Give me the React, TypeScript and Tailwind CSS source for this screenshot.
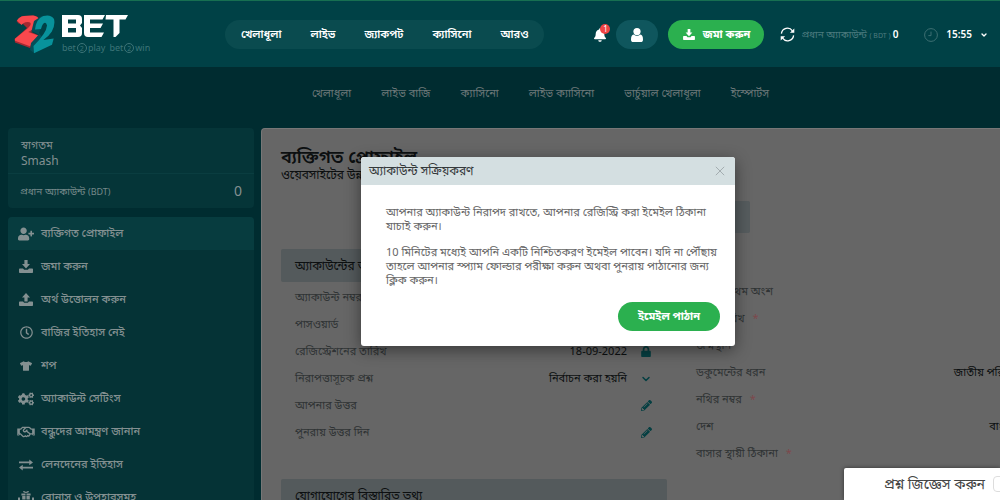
import type { ReactNode } from 'react'
import { ChevronDown } from 'lucide-react'
import { FaBell, FaCogs, FaLock, FaPencilAlt, FaRegClock, FaRegHandshake, FaTshirt, FaUserPlus } from 'react-icons/fa'

function TrayIcon({ up = false, className = '' }: { up?: boolean; className?: string }) {
  return (
    <svg viewBox="0 0 14 13" fill="currentColor" className={className} aria-hidden="true">
      {up ? <path d="M7 0 11 4.6H8.6V8.6H5.4V4.6H3Z" /> : <path d="M5.4 0H8.6V4H11L7 8.6 3 4H5.4Z" />}
      <path d="M0 9.2Q0 8.4.8 8.4H4L5.2 9.8H8.8L10 8.4H13.2Q14 8.4 14 9.2V12.2Q14 13 13.2 13H.8Q0 13 0 12.2Z" />
    </svg>
  )
}

function ExchangeIcon() {
  return (
    <svg viewBox="0 0 15 12" fill="currentColor" className="w-[14px] h-3" aria-hidden="true">
      <path d="M0 2.2H11V.2L15 3.2 11 6.2V4.2H0Z" />
      <path d="M15 7.8H4V5.8L0 8.8 4 11.8V9.8H15Z" />
    </svg>
  )
}

function GiftIcon() {
  return (
    <svg viewBox="0 0 16 16" fill="currentColor" className="w-4 h-4" aria-hidden="true">
      <path d="M8 3Q5 3 5 1.6Q5.4 0 8 2Q10.6 0 11 1.6Q11 3 8 3Z" />
      <path d="M3.4 3.6H7.5V5.4H3.4ZM8.5 3.6H12.6V5.4H8.5ZM4.2 6H7.5V9.4H4.2ZM8.5 6H11.8V9.4H8.5Z" />
      <path d="M0 7.6H2V10.6L7.4 12.4V16H3.6L0 12.6ZM16 7.6H14V10.6L8.6 12.4V16H12.4L16 12.6Z" />
    </svg>
  )
}

function PersonIcon() {
  return (
    <svg viewBox="0 0 12 14" fill="currentColor" className="w-3 h-[14px]" aria-hidden="true">
      <circle cx="6" cy="3.6" r="3.6" />
      <path d="M2.6 6.6Q0 7.4 0 11.4Q0 14 2.4 14H9.6Q12 14 12 11.4Q12 7.4 9.4 6.6Q6 9.4 2.6 6.6Z" />
    </svg>
  )
}

function RefreshIcon() {
  return (
    <svg viewBox="0 0 15 15" className="w-[15px] h-[15px]" aria-hidden="true">
      <path d="M1.4 6.6A6.1 6.1 0 0 1 12.4 3.8M13.6 8.4A6.1 6.1 0 0 1 2.6 11.2" fill="none" stroke="currentColor" strokeWidth="1.3" />
      <path d="M14.3 1.4V5.8H9.9ZM.7 13.6V9.2H5.1Z" fill="currentColor" />
    </svg>
  )
}

function ClockIcon() {
  return (
    <svg viewBox="0 0 14 14" fill="none" stroke="currentColor" className="w-[14px] h-[14px]" aria-hidden="true">
      <circle cx="7" cy="7" r="6.4" />
      <path d="M7 3.6V7.6H4.4" />
    </svg>
  )
}

function Logo() {
  return (
    <a href="#home" className="flex items-start gap-1.5 w-[211px] pt-0.5" aria-label="22BET">
      <svg viewBox="0 0 42 40" className="w-[42px] h-10 shrink-0" aria-hidden="true">
        <path d="M2.5 6 8 1 20 .4Q27 1.500 26 9Q25 13 17 17L26 21 22 27 16 33 1 27.500 .5 24 13 13 9 9 4.500 8.500Z" fill="#a52a33" />
        <path d="M3 5.500Q5 1.500 10 1L19 .6Q25.500 1.200 25 7Q24.300 11.500 19 14.300L14.300 17 24 20.500 16 31.300 1 25.700 1 23.800 13.500 13.500Q17.500 10 16.500 8Q15.500 6.400 11.500 7.200Q9 7.800 7.500 10Z" fill="#fa484d" />
        <path d="M17.500 16 20 6 28 .7 33 4 29 9 25 18 30 25 20 38 16 35 17 28 25 19.500Z" fill="#044f58" />
        <path d="M21 14.500Q22 4 29.300 1Q37 -1 40 4Q41.500 10 37.700 16.700Q35 21 29.300 25L39.700 23.600 38 29.700 20 38.300 19.500 31Q32.500 18 33 10.500Q32 6 29 9Q27.500 11 27 14Z" fill="#08929b" />
      </svg>
      <span className="flex flex-col">
        <svg viewBox="0 0 66 22" className="w-[66px] h-[22px]" fill="#fff" aria-hidden="true">
          <path fillRule="evenodd" d="M0 0H16Q20 0 20 4V8L18 10.5 20 13V18Q20 22 16 22H0ZM6 4.6V8.6H14V4.6ZM6 13V17.4H14V13Z" />
          <path d="M22 0H43L40.5 4.6H28V8.6H41L38.5 13H28V17.4H42L39.5 22H26Q22 22 22 18Z" />
          <path d="M44 0H66L63.5 4.6H57.5V18L53.5 22H51.5V4.6H43.5Z" />
        </svg>
        <span className="flex items-center gap-1 mt-1 text-[9px] leading-[14px] text-[#3d7478] whitespace-nowrap">
          <span className="flex items-center">bet<Two />play</span>
          <span className="flex items-center">bet<Two />win</span>
        </span>
      </span>
    </a>
  )
}

function Two() {
  return <span className="grid place-items-center w-[10px] h-[10px] mx-px rounded-full border border-[#3d7478] text-[7px] leading-none">2</span>
}

const topLinks = ['খেলাধূলা', 'লাইভ', 'জ্যাকপট', 'ক্যাসিনো', 'আরও']
const subLinks = ['খেলাধূলা', 'লাইভ বাজি', 'ক্যাসিনো', 'লাইভ ক্যাসিনো', 'ভার্চুয়াল খেলাধূলা', 'ইস্পোর্টস']

const menu: { label: string; icon: ReactNode }[] = [
  { label: 'ব্যক্তিগত প্রোফাইল', icon: <FaUserPlus className="w-4 h-[14px]" /> },
  { label: 'জমা করুন', icon: <TrayIcon className="w-[14px] h-[13px]" /> },
  { label: 'অর্থ উত্তোলন করুন', icon: <TrayIcon up className="w-[14px] h-[13px]" /> },
  { label: 'বাজির ইতিহাস নেই', icon: <FaRegClock className="w-[13px] h-[13px]" /> },
  { label: 'শপ', icon: <FaTshirt className="w-3 h-3" /> },
  { label: 'অ্যাকাউন্ট সেটিংস', icon: <FaCogs className="w-4 h-[14px]" /> },
  { label: 'বন্ধুদের আমন্ত্রণ জানান', icon: <FaRegHandshake className="w-[18px] h-[14px]" /> },
  { label: 'লেনদেনের ইতিহাস', icon: <ExchangeIcon /> },
  { label: 'বোনাস ও উপহারসমূহ', icon: <GiftIcon /> },
]

function Header() {
  return (
    <header className="flex items-start h-[67px] shrink-0 border-t border-[#176f51] bg-[#004146] pl-[14px] pr-3 pt-3">
      <Logo />
      <nav className="flex items-center gap-[29px] h-[29px] mt-[7px] px-4 rounded-full bg-[#0a4b4f] text-[11px] font-semibold text-white whitespace-nowrap">
        {topLinks.map((label) => (
          <a key={label} href="#top">{label}</a>
        ))}
      </nav>
      <div className="flex items-center h-[29px] mt-[7px] ml-auto text-white whitespace-nowrap">
        <button type="button" aria-label="1" className="relative mr-2.5">
          <FaBell className="w-3 h-[14px]" />
          <span className="absolute -top-1 -right-1 grid place-items-center w-[10px] h-[10px] rounded-full bg-[#ee4444] text-[8px] leading-none">1</span>
        </button>
        <button type="button" aria-label="Smash" className="grid place-items-center w-[42px] h-[29px] rounded-full bg-[#0f565d]">
          <PersonIcon />
        </button>
        <button type="button" className="flex items-center justify-center gap-2 w-24 h-[29px] ml-[10px] rounded-full bg-[#2bb04f] text-[11px] font-bold">
          <TrayIcon className="w-3 h-[11px]" />
          জমা করুন
        </button>
        <button type="button" aria-label="প্রধান অ্যাকাউন্ট" className="ml-4 mr-1.5">
          <RefreshIcon />
        </button>
        <span className="text-[10px] text-[#4d7b7f]">প্রধান অ্যাকাউন্ট <span className="text-[7px]">( BDT )</span></span>
        <span className="ml-0.5 text-[10px] font-semibold">0</span>
        <button type="button" className="flex items-center ml-[26px] text-[10px] font-semibold">
          <span className="mr-2 text-[#3d6f72]"><ClockIcon /></span>
          15:55
          <ChevronDown className="w-2 h-2 ml-2" strokeWidth={4} />
        </button>
      </div>
    </header>
  )
}

function Sidebar() {
  return (
    <aside className="flex flex-col gap-[9px] w-[246px] shrink-0 text-[#839091]">
      <div className="rounded bg-[#053538]">
        <div className="h-[46px] px-[13px] pt-[9px] border-b border-[#0a3d40]">
          <p className="text-[11px] leading-4">স্বাগতম</p>
          <p className="text-xs leading-4">Smash</p>
        </div>
        <div className="flex items-center justify-between h-[34px] px-3 text-[10px] text-[#75898a]">
          <span>প্রধান অ্যাকাউন্ট <span className="text-[9px]">(BDT)</span></span>
          <span className="text-sm text-[#839091]">0</span>
        </div>
      </div>
      <nav className="rounded-t bg-[#053336] overflow-hidden">
        {menu.map(({ label, icon }, i) => (
          <a key={label} href="#menu" className={`flex items-center h-[33px] pl-2 text-[11px] font-medium ${i === 0 ? 'bg-[#073c3f]' : ''}`}>
            <span className="grid place-items-center w-5 mr-[5px]">{icon}</span>
            {label}
          </a>
        ))}
      </nav>
    </aside>
  )
}

function Row({ label, value, icon, required }: { label: string; value?: string; icon?: ReactNode; required?: boolean }) {
  return (
    <div className="flex items-center h-[27px] text-[11px]">
      <dt className="text-[#2f3334]">
        {label}
        {required && <span className="ml-2 text-[#7d484c]">*</span>}
      </dt>
      <dd className="flex items-center ml-auto text-[#0c0f10]">
        {value}
        <span className="grid place-items-center w-[14px] ml-3 text-[#053f42]">{icon}</span>
      </dd>
    </div>
  )
}

function Profile() {
  return (
    <main className="flex-1 min-w-0 rounded-tl bg-[#666] border-t border-l border-[#777] pl-[19px] pt-4 text-[#0c0f10] whitespace-nowrap">
      <h1 className="text-lg leading-[22px] font-semibold">ব্যক্তিগত প্রোফাইল</h1>
      <p className="text-xs leading-4">ওয়েবসাইটের উন্নত ব্যবহারের জন্য</p>
      <div className="h-8 w-[120px] ml-[349px] mt-[18px] rounded-xs bg-[#565c5e]" />
      <div className="flex gap-[29px]">
        <section className="w-[386px] shrink-0 pt-4">
          <h2 className="flex items-center h-[33px] px-[14px] mb-0.5 rounded-xs bg-[#545a5c] text-xs">অ্যাকাউন্টের তথ্য</h2>
          <dl className="px-[14px]">
            <Row label="অ্যাকাউন্ট নম্বর" />
            <Row label="পাসওয়ার্ড" icon={<FaPencilAlt className="w-[11px] h-[11px]" />} />
            <Row label="রেজিস্ট্রেশনের তারিখ" value="18-09-2022" icon={<FaLock className="w-[10px] h-[11px]" />} />
            <Row label="নিরাপত্তাসূচক প্রশ্ন" value="নির্বাচন করা হয়নি" icon={<ChevronDown className="w-3 h-3" strokeWidth={3} />} />
            <Row label="আপনার উত্তর" icon={<FaPencilAlt className="w-[11px] h-[11px]" />} />
            <Row label="পুনরায় উত্তর দিন" icon={<FaPencilAlt className="w-[11px] h-[11px]" />} />
          </dl>
          <h2 className="flex items-center h-[33px] px-[14px] mt-[33px] rounded-xs bg-[#545a5c] text-xs">যোগাযোগের বিস্তারিত তথ্য</h2>
        </section>
        <dl className="w-[362px] shrink-0 pt-[45px]">
          <Row label="নামের প্রথম অংশ" />
          <Row label="জন্ম তারিখ" required />
          <Row label="জন্মস্থান" />
          <Row label="ডকুমেন্টের ধরন" value="জাতীয় পরিচয়পত্র" />
          <Row label="নথির নম্বর" required />
          <Row label="দেশ" value="বাংলাদেশ" />
          <Row label="বাসার স্থায়ী ঠিকানা" required />
        </dl>
      </div>
    </main>
  )
}

function ActivationDialog() {
  return (
    <div role="dialog" aria-labelledby="activation" className="absolute left-[361px] top-[157px] w-[374px] rounded-[3px] bg-white overflow-hidden shadow-[0_4px_16px_rgba(0,0,0,0.45)]">
      <div className="flex items-center justify-between h-7 px-2 bg-[#d4dfe1]">
        <h2 id="activation" className="text-xs text-[#34393b]">অ্যাকাউন্ট সক্রিয়করণ</h2>
        <button type="button" aria-label="বন্ধ" className="mr-0.5 text-[#a3adb0]">
          <svg viewBox="0 0 10 10" className="w-[10px] h-[10px]" stroke="currentColor" aria-hidden="true"><path d="M.8.8 9.2 9.2M9.2.8.8 9.2" /></svg>
        </button>
      </div>
      <div className="px-[25px] pt-5 text-[11px] leading-[14px] text-[#666]">
        <p className="whitespace-nowrap">আপনার অ্যাকাউন্ট নিরাপদ রাখতে, আপনার রেজিস্ট্রি করা ইমেইল ঠিকানা<br />যাচাই করুন।</p>
        <p className="mt-3 whitespace-nowrap">10 মিনিটের মধ্যেই আপনি একটি নিশ্চিতকরণ ইমেইল পাবেন। যদি না পৌঁছায়<br />তাহলে আপনার স্প্যাম ফোল্ডার পরীক্ষা করুন অথবা পুনরায় পাঠানোর জন্য<br />ক্লিক করুন।</p>
      </div>
      <div className="flex justify-end px-[15px] py-[15px]">
        <button type="button" className="w-[102px] h-[29px] rounded-full bg-[#2bb04f] text-[11px] font-bold text-white">ইমেইল পাঠান</button>
      </div>
    </div>
  )
}

export default function App() {
  return (
    <div className="relative flex flex-col h-screen overflow-hidden bg-[#002c30] font-['Noto_Sans','Noto_Sans_Bengali',sans-serif]">
      <Header />
      <nav className="flex items-center gap-[30px] h-[50px] shrink-0 pl-[312px] pt-[3px] text-[11px] text-[#6b7778] whitespace-nowrap">
        {subLinks.map((label, i) => (
          <a key={i} href="#section">{label}</a>
        ))}
      </nav>
      <div className="flex flex-1 gap-[7px] min-h-0 pl-2 pt-[11px]">
        <Sidebar />
        <Profile />
      </div>
      <ActivationDialog />
      <button type="button" className="absolute right-0 bottom-0 flex items-center w-[156px] h-8 pl-10 overflow-hidden rounded-tl-xs bg-white text-sm text-[#444] whitespace-nowrap shadow-[0_0_4px_rgba(0,0,0,0.5)]">
        প্রশ্ন জিজ্ঞেস করুন
        <span className="shrink-0 w-5 h-4 ml-2 rounded border border-[#ddd]" />
      </button>
    </div>
  )
}
